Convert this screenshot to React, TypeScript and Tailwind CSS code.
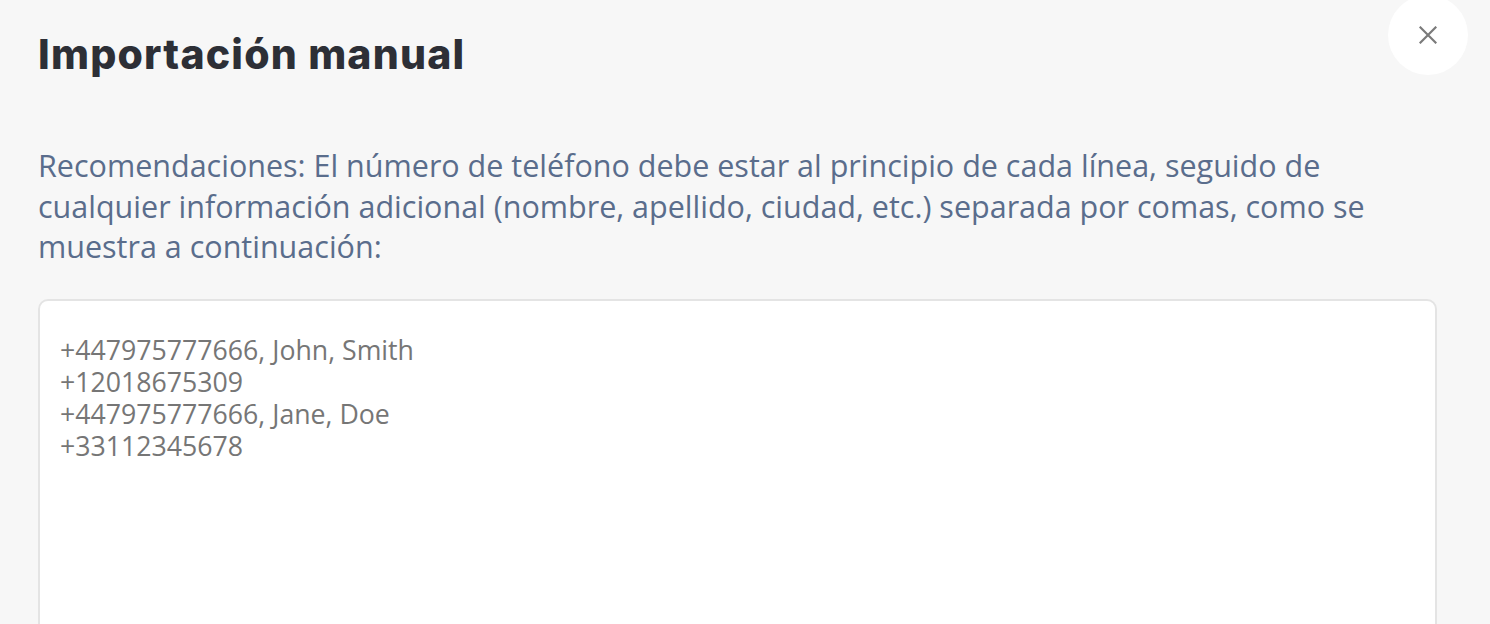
import React from "react";

export default function App() {
  const placeholder =
    "+447975777666, John, Smith\n+12018675309\n+447975777666, Jane, Doe\n+33112345678";
  return (
    <div className="relative min-h-screen overflow-hidden bg-[#f7f7f7] pl-[38px] pr-[53px]">
      <button
        type="button"
        className="absolute right-[22px] top-[-5px] flex h-[80px] w-[80px] items-center justify-center rounded-full bg-white"
        aria-label="Cerrar"
      >
        <svg width="18" height="18" viewBox="0 0 18 18" fill="none">
          <path d="M1.5 1.5 L16.5 16.5 M16.5 1.5 L1.5 16.5" stroke="#7a7a7a" strokeWidth="2.2" strokeLinecap="square" />
        </svg>
      </button>
      <h1 className="pt-[30px] font-['Inter',sans-serif] text-[41px] leading-[48px] font-extrabold tracking-[1.2px] text-[#2d2f36]">
        Importación manual
      </h1>
      <p className="mt-[67px] font-['Open_Sans',sans-serif] text-[30.5px] leading-[40.5px] text-[#5a6d8c]">
        Recomendaciones: El número de teléfono debe estar al principio de cada línea, seguido de
        cualquier información adicional (nombre, apellido, ciudad, etc.) separada por comas, como se
        muestra a continuación:
      </p>
      <textarea
        placeholder={placeholder}
        className="mt-[32px] block h-[400px] w-full resize-none rounded-[10px] border-2 border-[#e4e4e4] bg-white px-[20px] pt-[33px] font-['Open_Sans',sans-serif] text-[26.7px] leading-[32px] text-[#444] outline-none placeholder:text-[#767676]"
      />
    </div>
  );
}
